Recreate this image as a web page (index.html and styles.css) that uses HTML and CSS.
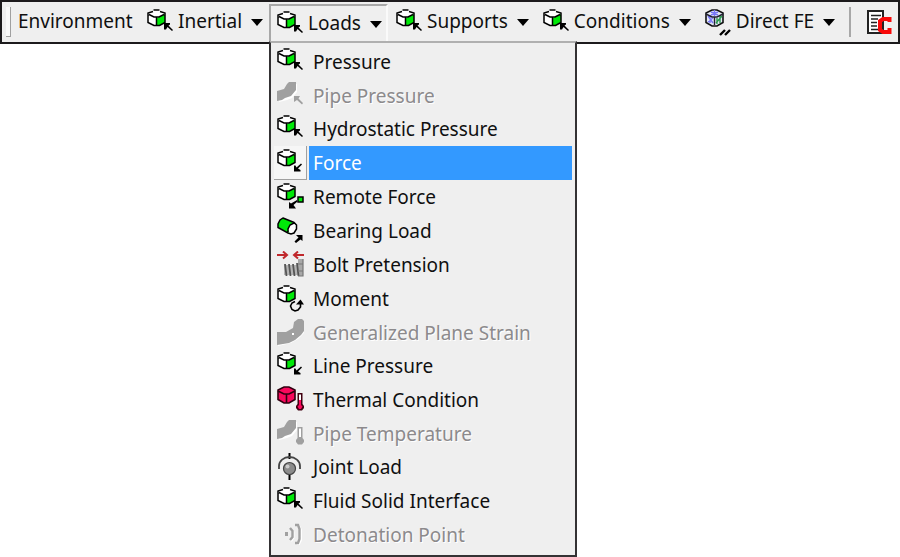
FILE: index.html
```html
<!DOCTYPE html>
<html lang="en">
<head>
    <meta charset="UTF-8">
    <meta name="viewport" content="width=device-width, initial-scale=1.0">
    <title>Environment</title>

    <link rel="stylesheet" href="styles.css">
</head>
<body>

    <!-- shared icon parts -->
    <svg class="defs" aria-hidden="true">
        <symbol id="cube" viewBox="0 0 27 27">
            <path d="M7 1 H12 L18 4 V13 L12 17 H7 L1 13 V4 Z" fill="#fff"/>
            <path d="M10 9 L18 5 V13 L12 17 H10 Z" fill="#00e808"/>
            <path d="M6.500 1 H12.500 M13 2.500 L18 4 V13.500 L12.500 16.500 H7 L1 13.500 V4 L6 2.500 M2 5.500 L7 8 H12 L17 5.500 M9.500 8 V16" fill="none" stroke="#000" stroke-width="1.5"/>
        </symbol>
        <symbol id="arrow-in" viewBox="0 0 27 27">
            <path d="M17 14 H23 V15.500 L21.500 16.500 L26 21 L25 22 L20.500 18 L19 20.500 H17 Z" fill="#000"/>
        </symbol>
        <symbol id="arrow-out" viewBox="0 0 27 27">
            <path d="M17 22.500 V16.500 H18.500 L19.500 18.500 L24 14.500 L25 15.500 L21 19.500 L23.500 21 V22.500 Z" fill="#000"/>
        </symbol>
        <symbol id="pipe" viewBox="0 0 27 27">
            <path d="M1 9 L8 7 L11 2 L19 1 V9 L14 15 L9 17 L1 19 Z" fill="#fff" transform="translate(1 1)"/>
            <path d="M0 9 L7 7 L10 2 L12 0 H19 V8 L14 14 L8 16 L5 18 L0 19 Z" fill="#a0a0a0"/>
        </symbol>
        <symbol id="thermo" viewBox="0 0 27 27">
            <path d="M20.500 7 H25.500 V18 L27 20 V22 L25 24.500 H21 L19 22 V20 L20.500 18 Z" fill="currentColor"/>
        </symbol>
    </svg>

    <header class="toolbar">
        <span class="grip"></span>
        <span class="title">Environment</span>

        <button type="button" class="tool">
            <svg class="icon"><use href="#cube"/><use href="#arrow-in"/></svg>
            <span>Inertial</span>
            <span class="caret"></span>
        </button>

        <div class="dropdown">
            <button type="button" class="tool open" aria-expanded="true" aria-controls="loads">
                <svg class="icon"><use href="#cube"/><use href="#arrow-in"/></svg>
                <span>Loads</span>
                <span class="caret"></span>
            </button>

            <div class="menu" id="loads" role="menu">
                <button type="button" class="item" role="menuitem">
                    <span class="slot"><svg class="icon"><use href="#cube"/><use href="#arrow-in"/></svg></span>
                    <span class="label">Pressure</span>
                </button>
                <button type="button" class="item" role="menuitem" disabled>
                    <span class="slot"><svg class="icon"><use href="#pipe"/><path d="M17 14 H23 L21.500 16.500 L26 21 L25 22.500 L20 18 L17 20 Z" fill="#a0a0a0"/></svg></span>
                    <span class="label">Pipe Pressure</span>
                </button>
                <button type="button" class="item" role="menuitem">
                    <span class="slot"><svg class="icon"><use href="#cube"/><use href="#arrow-in"/></svg></span>
                    <span class="label">Hydrostatic Pressure</span>
                </button>
                <button type="button" class="item selected" role="menuitem">
                    <span class="slot"><svg class="icon"><use href="#cube"/><use href="#arrow-out"/></svg></span>
                    <span class="label">Force</span>
                </button>
                <button type="button" class="item" role="menuitem">
                    <span class="slot"><svg class="icon">
                        <use href="#cube"/>
                        <path d="M12 25.500 V19 L14 20.500 L20 17 L20.500 18.500 L16.500 22 L19 25.500 Z"/>
                        <rect x="21" y="14" width="5" height="5" fill="#00e808" stroke="#000" stroke-width="1.5"/>
                    </svg></span>
                    <span class="label">Remote Force</span>
                </button>
                <button type="button" class="item" role="menuitem">
                    <span class="slot"><svg class="icon">
                        <path d="M6 1 L17 5.500 L20 8 V12 L17 16.500 H13 L1 10 Z" fill="#fff"/>
                        <path d="M6 1 L16 5.500 L13 8 L11 12 L12 16 L1 10 V7 L3 3 Z" fill="#00e808"/>
                        <path d="M6 1 L17 5.500 L19.500 8 V12 L17 16 L14 17 L11 16 L1 10.500 V7 L3 3 Z M17 6 L13 8 L11 12 V15" fill="none" stroke="#000" stroke-width="1.5"/>
                        <path d="M19 18 H25.500 V24 L23.500 22.500 L19 26 L17.500 24.500 L21.500 20.500 Z"/>
                    </svg></span>
                    <span class="label">Bearing Load</span>
                </button>
                <button type="button" class="item" role="menuitem">
                    <span class="slot"><svg class="icon">
                        <path d="M0 4 H9 M6 0.500 L10 4 L6 7.500 M27 4 H18 M21 0.500 L17 4 L21 7.500" fill="none" stroke="#c0282c" stroke-width="2"/>
                        <path d="M7 14 H21 V24 H7 Z" fill="#b4b4b4"/>
                        <path d="M21 8 H26 V25 H21 Z" fill="#a8a8a8"/>
                        <path d="M8 13 L9.500 25 M12 13 L13.500 25 M16 13 L17.500 25 M20 12 L21.500 25" stroke="#555" stroke-width="1.8"/>
                        <path d="M26 8 V25 H21 M21 13 H26 M21 20 H26" fill="none" stroke="#777" stroke-width="1.2"/>
                    </svg></span>
                    <span class="label">Bolt Pretension</span>
                </button>
                <button type="button" class="item" role="menuitem">
                    <span class="slot"><svg class="icon">
                        <use href="#cube"/>
                        <path d="M18 16.500 L15 18 L13.500 21 L15 24.500 L18 26 L21 25 L23.500 22 V18" fill="none" stroke="#000" stroke-width="1.6"/>
                        <path d="M19 19.500 L23.500 14.500 L27 19.500 Z"/>
                    </svg></span>
                    <span class="label">Moment</span>
                </button>
                <button type="button" class="item" role="menuitem" disabled>
                    <span class="slot"><svg class="icon">
                        <path d="M1 14 H11 L17 9 L18 3 L23 1 L27 2 V14 L21 20 L14 24 L1 27 Z" fill="#fff"/>
                        <path d="M0 13 H9 L16 9 L17 3 L21 0 H25 L27 2 V12 L24 16 L18 21 L12 24 L0 26 Z" fill="#a0a0a0"/>
                        <path d="M15 14 H17 V16 H15 Z" fill="#fff"/>
                    </svg></span>
                    <span class="label">Generalized Plane Strain</span>
                </button>
                <button type="button" class="item" role="menuitem">
                    <span class="slot"><svg class="icon"><use href="#cube"/><use href="#arrow-out"/></svg></span>
                    <span class="label">Line Pressure</span>
                </button>
                <button type="button" class="item" role="menuitem">
                    <span class="slot"><svg class="icon">
                        <path d="M7 1 H12 L18 4 V13.500 L12 17 H7 L1 13.500 V4 Z" fill="#f8085c" stroke="#300010" stroke-width="1.6"/>
                        <path d="M1 5 L7 8 H12 L18 5 M9.500 8 V17" fill="none" stroke="#300010" stroke-width="1.6"/>
                        <use href="#thermo" color="#400010"/>
                        <path d="M22 8.500 H24 V14 H22 Z" fill="#fff"/>
                        <path d="M22 14 H24 V19 L25.500 20.500 L24 23 H22 L20.500 20.500 L22 19 Z" fill="#f8085c"/>
                    </svg></span>
                    <span class="label">Thermal Condition</span>
                </button>
                <button type="button" class="item" role="menuitem" disabled>
                    <span class="slot"><svg class="icon">
                        <use href="#pipe"/>
                        <use href="#thermo" color="#a0a0a0"/>
                        <path d="M22 8.500 H24 V17 H22 Z" fill="#fff"/>
                    </svg></span>
                    <span class="label">Pipe Temperature</span>
                </button>
                <button type="button" class="item" role="menuitem">
                    <span class="slot"><svg class="icon">
                        <path d="M12.500 0 V6 M12.500 20 V27" stroke="#000" stroke-width="2"/>
                        <path d="M2 16 V13 A10.500 9 0 0 1 23 13 V16" fill="none" stroke="#444" stroke-width="1.8"/>
                        <circle cx="12.500" cy="15.500" r="6" fill="#8c8c8c" stroke="#444" stroke-width="1.2"/>
                        <circle cx="10.500" cy="13.500" r="2" fill="#ccc"/>
                    </svg></span>
                    <span class="label">Joint Load</span>
                </button>
                <button type="button" class="item" role="menuitem">
                    <span class="slot"><svg class="icon"><use href="#cube"/><use href="#arrow-in"/></svg></span>
                    <span class="label">Fluid Solid Interface</span>
                </button>
                <button type="button" class="item" role="menuitem" disabled>
                    <span class="slot"><svg class="icon">
                        <path d="M8 11 H11 V15 H8 Z" fill="#a0a0a0"/>
                        <path d="M13 7 L15.500 10 V16 L13 19 M19 4 H21 L23 8 V18 L21 22 H19" transform="translate(1 1)" fill="none" stroke="#fff" stroke-width="2"/>
                        <path d="M13 7 L15.500 10 V16 L13 19 M18 4 H21 L22.500 8 V18 L21 22 H18" fill="none" stroke="#a0a0a0" stroke-width="2.400"/>
                    </svg></span>
                    <span class="label">Detonation Point</span>
                </button>
            </div>
        </div>

        <button type="button" class="tool">
            <svg class="icon"><use href="#cube"/><use href="#arrow-in"/></svg>
            <span>Supports</span>
            <span class="caret"></span>
        </button>
        <button type="button" class="tool">
            <svg class="icon"><use href="#cube"/><use href="#arrow-in"/></svg>
            <span>Conditions</span>
            <span class="caret"></span>
        </button>
        <button type="button" class="tool">
            <svg class="icon">
                <path d="M7 1 H12 L18 4 V13.500 L12 17 H7 L1 13.500 V4 Z" fill="#e4e8f4" stroke="#111" stroke-width="1.6"/>
                <path d="M6 3 L13 6 M13 3 L6 6 M9.500 1 V7 M3 7 L8 14 M8 9 L3 13 M5 6 V14" stroke="#7878f8" stroke-width="1.400"/>
                <path d="M11 14 L17 7 M12 9 V15 M15 7 V14" stroke="#2c9c50" stroke-width="1.400"/>
                <path d="M1 5 L7 8 H12 L18 5 M9.500 8 V16" fill="none" stroke="#223" stroke-width="1.4"/>
                <path d="M15 26 L20 21 M20 26 L25 21" stroke="#000" stroke-width="2.400"/>
            </svg>
            <span>Direct FE</span>
            <span class="caret"></span>
        </button>

        <span class="divider"></span>

        <button type="button" class="tool" aria-label="Comment">
            <svg class="icon">
                <path d="M1 2 H16 V24 H1 Z" fill="#fff" stroke="#222" stroke-width="2"/>
                <path d="M4 6.500 H14 M4 10 H11 M4 13.500 H10 M4 17 H10 M4 20.500 H12" stroke="#222" stroke-width="1.600"/>
                <path d="M22.500 13 V10 H16 L13 12 V21 L16 23 H22.500 V19" fill="none" stroke="#f80808" stroke-width="4"/>
            </svg>
        </button>
    </header>

</body>
</html>
```

FILE: styles.css
```css
*{
    box-sizing: border-box;
}
body{
    min-height: 100vh;
    margin: 0;
    background-color: white;
    color: #101010;
    font-family: "Noto Sans", sans-serif;
    font-size: 19px;
    line-height: 26px;
}
button{
    border: none;
    background: none;
    color: inherit;
    font: inherit;
    text-align: left;
}
.defs{
    position: absolute;
    width: 0;
    height: 0;
}
.icon{
    width: 27px;
    height: 27px;
    flex: none;
}

.toolbar{
    display: flex;
    align-items: center;
    height: 44px;
    border: 2px solid #1c1a1c;
    background-color: #efefef;
    white-space: nowrap;
}
.grip{
    flex: none;
    width: 5px;
    height: 30px;
    margin-left: 4px;
    background-color: #fafafa;
    border-right: 1px solid #a0a0a0;
    border-bottom: 1px solid #a0a0a0;
}
.title{
    flex: none;
    width: 121px;
    margin-left: 7px;
    padding-bottom: 2px;
}
.tool{
    display: flex;
    align-items: center;
    gap: 4px;
    height: 37px;
    padding: 0 6px 0 8px;
}
.tool:last-child{
    padding-right: 0;
}
.tool .icon{
    margin-top: 1px;
}
.tool span{
    margin-bottom: 2px;
}
.tool .caret{
    margin: 0 0 0 5px;
    border: 6px solid transparent;
    border-top: 7px solid black;
    border-bottom: none;
}
.tool.open{
    padding: 2px 4px 0 6px;
    border: 2px solid #fafafa;
    border-top-color: #a8a8a8;
    border-left-color: #a8a8a8;
    border-bottom: none;
}
.divider{
    flex: none;
    width: 2px;
    height: 30px;
    margin: 0 8px;
    background-color: #a8a8a8;
}

.dropdown{
    position: relative;
}
.menu{
    position: absolute;
    top: 100%;
    left: 0;
    z-index: 1;
    width: 308px;
    padding: 2px 3px 4px;
    border: 2px solid #343234;
    border-top-color: #b0b0b0;
    background-color: #efefef;
}
.item{
    display: flex;
    gap: 2px;
    width: 100%;
    height: 34px;
    padding: 0;
}
.item:disabled{
    height: 33px;
    color: #8c8a8c;
    text-shadow: 1px 1px white;
}
.slot{
    display: flex;
    align-items: center;
    width: 33px;
    padding-left: 3px;
}
.label{
    flex: 1;
    padding: 4px;
}
.selected .slot{
    background-color: #f6f6f6;
    border-right: 1px solid #a0a0a0;
    border-bottom: 1px solid #a0a0a0;
}
.selected .label{
    background-color: #3399ff;
    color: white;
}
```
